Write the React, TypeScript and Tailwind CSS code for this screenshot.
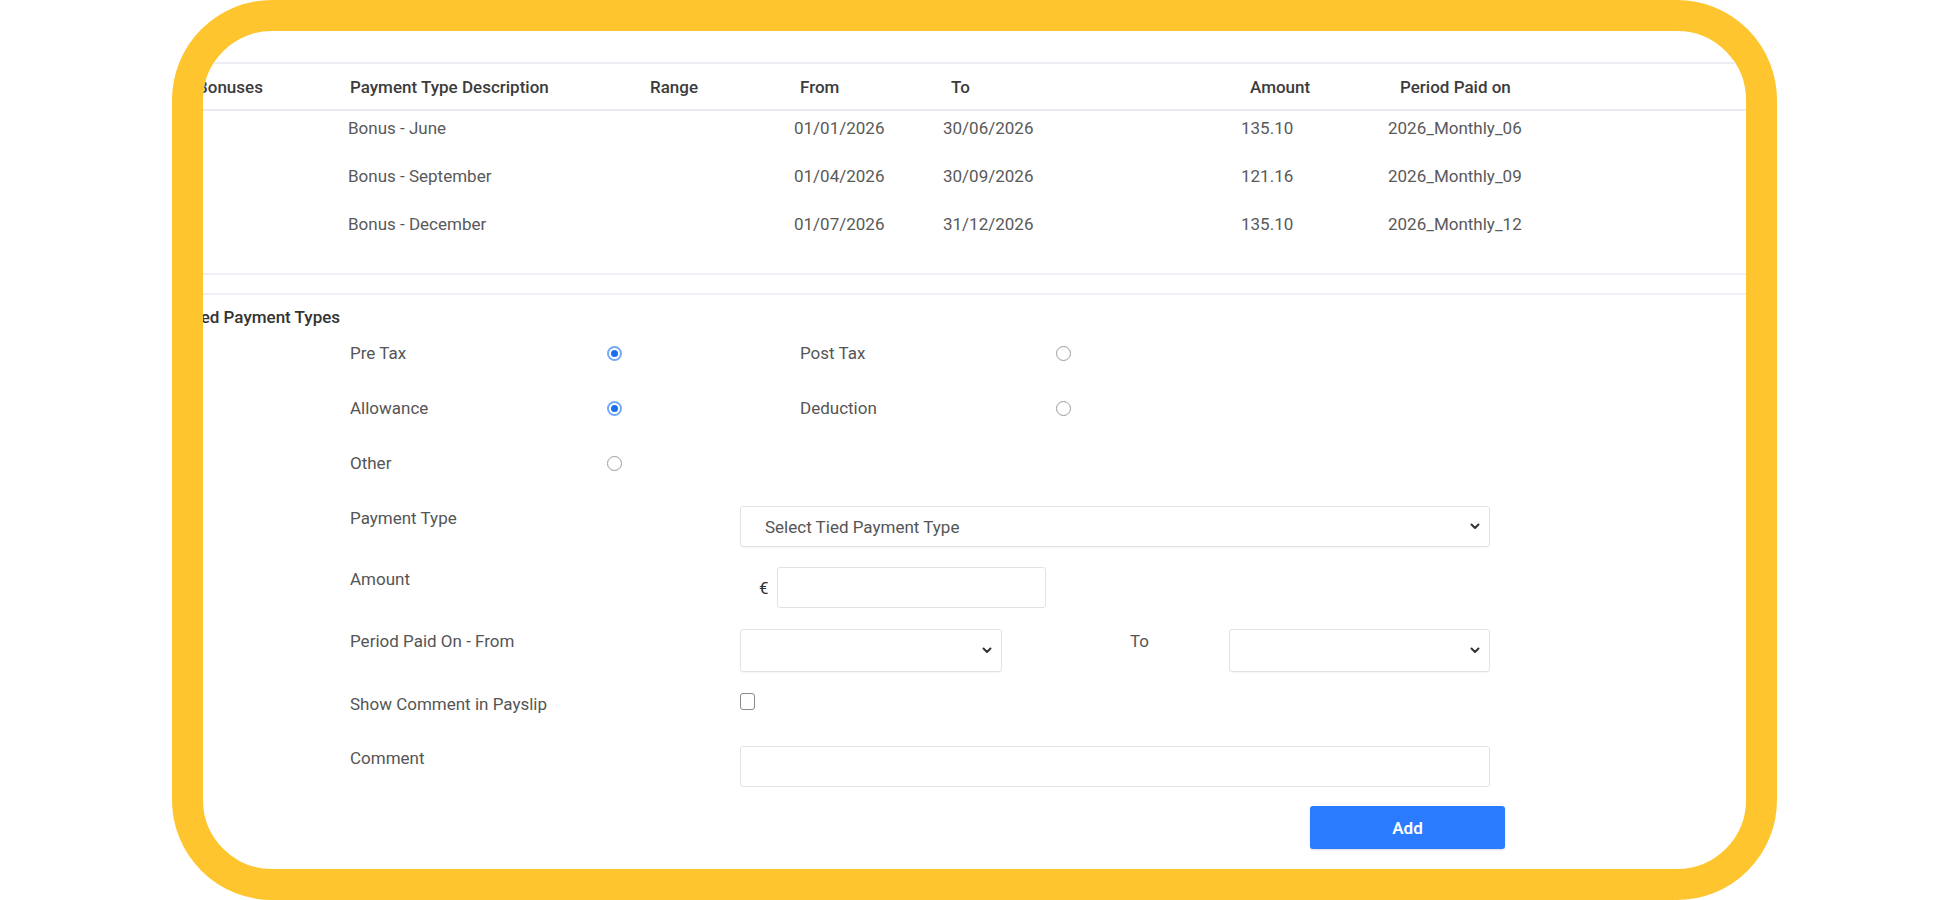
const rows = [
  { desc: "Bonus - June", from: "01/01/2026", to: "30/06/2026", amount: "135.10", period: "2026_Monthly_06" },
  { desc: "Bonus - September", from: "01/04/2026", to: "30/09/2026", amount: "121.16", period: "2026_Monthly_09" },
  { desc: "Bonus - December", from: "01/07/2026", to: "31/12/2026", amount: "135.10", period: "2026_Monthly_12" },
];

const cols = "grid grid-cols-[152px_300px_146px_149px_298px_147px_1fr]";

function Radio({ checked }: { checked?: boolean }) {
  return checked ? (
    <span className="flex h-[15px] w-[15px] items-center justify-center rounded-full border-2 border-[#74a8f8]">
      <span className="h-[7px] w-[7px] rounded-full bg-[#1a6ef0]" />
    </span>
  ) : (
    <span className="block h-[15px] w-[15px] rounded-full border-[1.5px] border-[#9c9c9c]" />
  );
}

function Chevron() {
  return (
    <svg width="10" height="7" viewBox="0 0 10 7" fill="none" stroke="#333" strokeWidth="2" strokeLinecap="round" strokeLinejoin="round">
      <path d="M1.5 1.5 L5 5 L8.5 1.5" />
    </svg>
  );
}

function Select({ width, text }: { width: string; text?: string }) {
  return (
    <div className={`${width} flex h-full items-center justify-between rounded-[3px] border border-[#dfe2e7] pl-[24px] pr-[9px] shadow-[0_1px_1px_rgba(0,0,0,0.04)]`}>
      <span className="text-[#555]">{text}</span>
      <Chevron />
    </div>
  );
}

function RadioRow({ a, aOn, b, bOn }: { a: string; aOn?: boolean; b?: string; bOn?: boolean }) {
  return (
    <div className="grid h-[24px] grid-cols-[154px_257px_193px_256px_15px] items-center">
      <span />
      <span className="text-[#555]">{a}</span>
      <Radio checked={aOn} />
      {b ? <span className="text-[#555]">{b}</span> : <span />}
      {b ? <Radio checked={bOn} /> : <span />}
    </div>
  );
}

function FormRow({ label, children, h }: { label: string; children?: React.ReactNode; h: string }) {
  return (
    <div className={`grid ${h} grid-cols-[154px_390px_1fr]`}>
      <span />
      <span className="h-[24px] leading-[24px] text-[#555]">{label}</span>
      <div className="flex h-full items-stretch">{children}</div>
    </div>
  );
}

export default function App() {
  return (
    <div className="h-[900px] w-[1950px] bg-white font-['Roboto',sans-serif] text-[17px] leading-[24px]">
      <div className="ml-[172px] h-[900px] w-[1605px] overflow-hidden rounded-[100px] border-[31px] border-[#FEC52E] bg-white">
        <div className="-ml-[7px]">
          {/* Bonuses table */}
          <div className="mt-[31px] h-[2px] bg-[#eceef4]" />
          <div className={`${cols} h-[45px] items-center font-medium text-[#3c3c3c]`}>
            <span className="ml-[1px]">Bonuses</span>
            <span className="pl-[2px]">Payment Type Description</span>
            <span className="pl-[2px]">Range</span>
            <span className="pl-[6px]">From</span>
            <span className="pl-[8px]">To</span>
            <span className="pl-[9px]">Amount</span>
            <span className="pl-[12px]">Period Paid on</span>
          </div>
          <div className="h-[2px] bg-[#e8eaf1]" />
          <div className="flex flex-col gap-[24px] pt-[5px] text-[#595959]">
            {rows.map((r) => (
              <div key={r.desc} className={`${cols} h-[24px] items-center`}>
                <span />
                <span>{r.desc}</span>
                <span />
                <span>{r.from}</span>
                <span>{r.to}</span>
                <span>{r.amount}</span>
                <span>{r.period}</span>
              </div>
            ))}
          </div>
          <div className="mt-[37px] h-[2px] bg-[#eef0f5]" />
          <div className="mt-[18px] h-[2px] bg-[#eef0f5]" />

          {/* Tied payment types */}
          <div className="-ml-[10px] mt-[10px] font-medium text-[#333]">Tied Payment Types</div>
          <div className="mt-[12px] flex flex-col gap-[31px]">
            <RadioRow a="Pre Tax" aOn b="Post Tax" />
            <RadioRow a="Allowance" aOn b="Deduction" />
            <RadioRow a="Other" />
          </div>

          <div className="mt-[31px] flex flex-col">
            <FormRow label="Payment Type" h="h-[41px]">
              <Select width="w-[750px]" text="Select Tied Payment Type" />
            </FormRow>
            <div className="mt-[20px]">
              <FormRow label="Amount" h="h-[41px]">
                <span className="self-center pl-[19px] pr-[8px] text-[#333]">€</span>
                <div className="w-[269px] rounded-[3px] border border-[#dfe2e7]" />
              </FormRow>
            </div>
            <div className="mt-[21px]">
              <FormRow label="Period Paid On - From" h="h-[43px]">
                <Select width="w-[262px]" />
                <span className="ml-[128px] w-[99px] text-[#555]">To</span>
                <Select width="w-[261px]" />
              </FormRow>
            </div>
            <div className="mt-[20px]">
              <FormRow label="Show Comment in Payslip" h="h-[24px]">
                <span className="mt-[1px] h-[17px] w-[15px] rounded-[3px] border-[1.5px] border-[#8a8a8a]" />
              </FormRow>
            </div>
            <div className="mt-[30px]">
              <FormRow label="Comment" h="h-[41px]">
                <div className="w-[750px] rounded-[3px] border border-[#dfe2e7]" />
              </FormRow>
            </div>
            <div className="mt-[19px] pl-[1114px]">
              <button className="h-[43px] w-[195px] rounded-[3px] bg-[#2a7bff] font-semibold text-white shadow-[0_1px_2px_rgba(0,0,0,0.15)]">
                Add
              </button>
            </div>
          </div>
        </div>
      </div>
    </div>
  );
}
